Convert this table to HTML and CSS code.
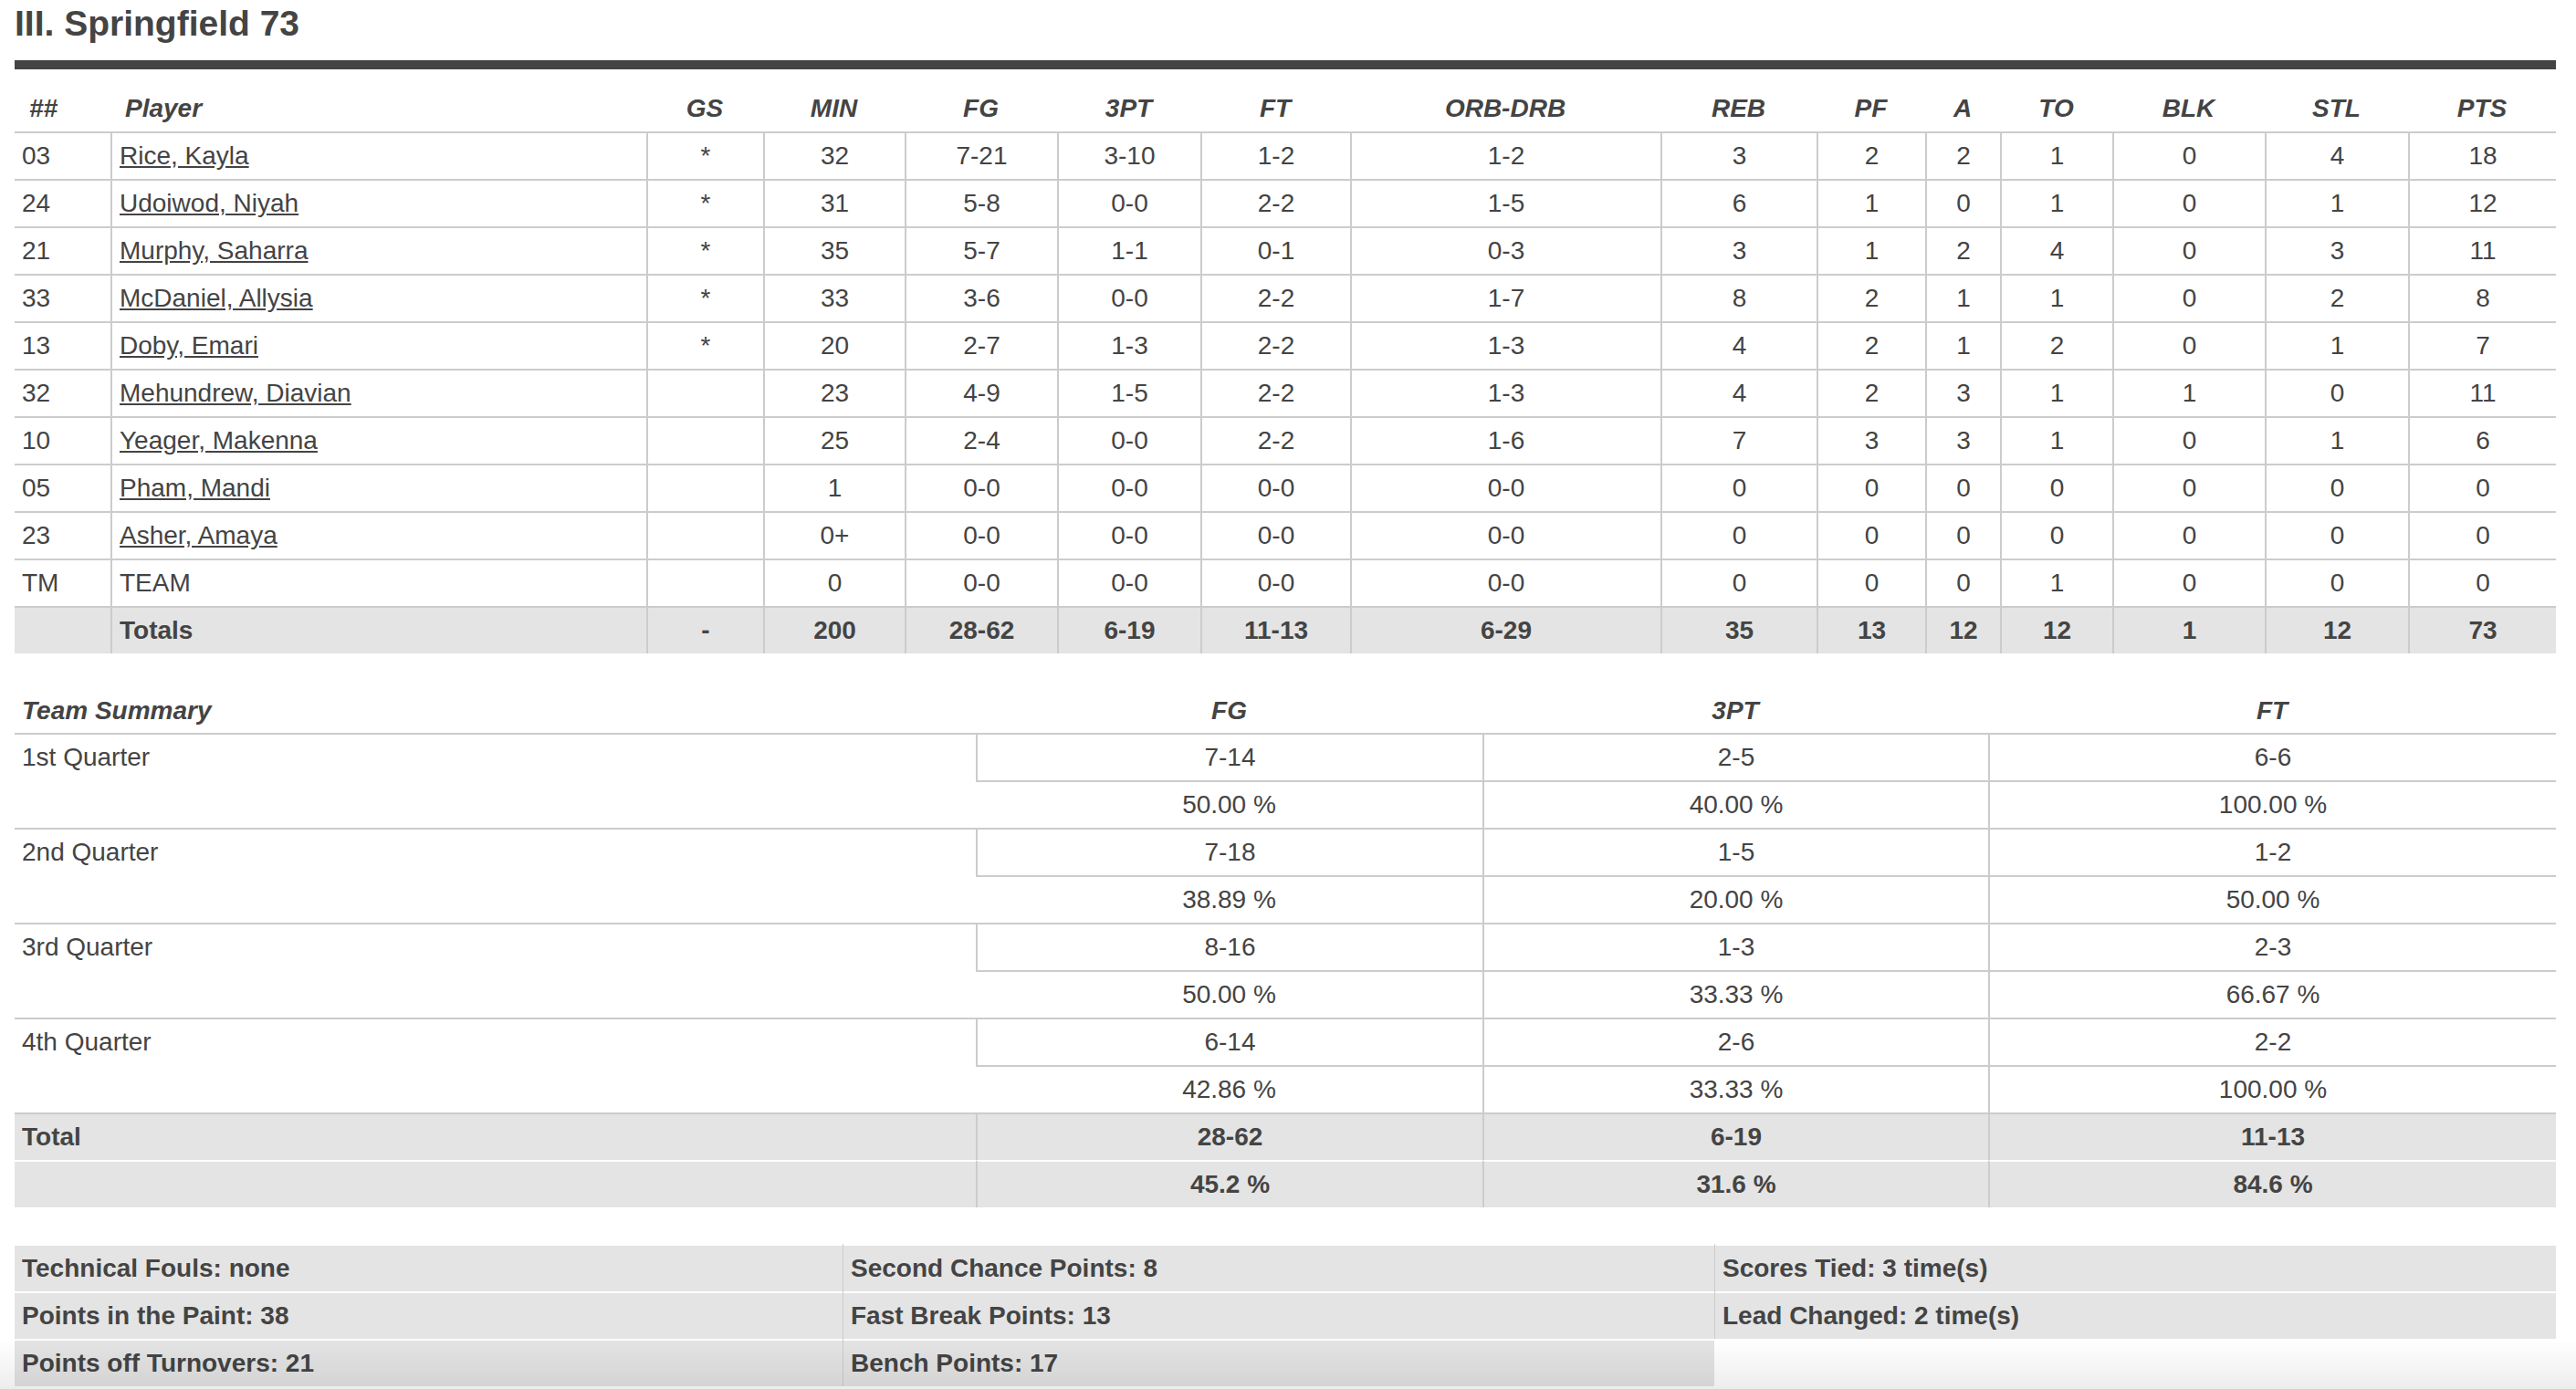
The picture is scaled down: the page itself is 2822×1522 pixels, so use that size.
FILE: index.html
```html
<!DOCTYPE html>
<html lang="en">
<head>
<meta charset="utf-8">
<title>Box Score</title>
<link rel="stylesheet" href="styles.css">
</head>
<body>
<div class="page">
  <h2 class="team-title">III. Springfield 73</h2>
  <div class="title-bar"></div>

  <table class="box">
    <colgroup>
      <col class="c-num"><col class="c-player"><col class="c-gs"><col class="c-min"><col class="c-fg"><col class="c-3pt"><col class="c-ft"><col class="c-reb2"><col class="c-reb"><col class="c-pf"><col class="c-a"><col class="c-to"><col class="c-blk"><col class="c-stl"><col class="c-pts">
    </colgroup>
    <thead>
      <tr>
        <th class="left">##</th><th class="left">Player</th><th>GS</th><th>MIN</th><th>FG</th><th>3PT</th><th>FT</th><th>ORB-DRB</th><th>REB</th><th>PF</th><th>A</th><th>TO</th><th>BLK</th><th>STL</th><th>PTS</th>
      </tr>
    </thead>
    <tbody>
      <tr><td class="left">03</td><td class="left"><a href="#">Rice, Kayla</a></td><td>*</td><td>32</td><td>7-21</td><td>3-10</td><td>1-2</td><td>1-2</td><td>3</td><td>2</td><td>2</td><td>1</td><td>0</td><td>4</td><td>18</td></tr>
      <tr><td class="left">24</td><td class="left"><a href="#">Udoiwod, Niyah</a></td><td>*</td><td>31</td><td>5-8</td><td>0-0</td><td>2-2</td><td>1-5</td><td>6</td><td>1</td><td>0</td><td>1</td><td>0</td><td>1</td><td>12</td></tr>
      <tr><td class="left">21</td><td class="left"><a href="#">Murphy, Saharra</a></td><td>*</td><td>35</td><td>5-7</td><td>1-1</td><td>0-1</td><td>0-3</td><td>3</td><td>1</td><td>2</td><td>4</td><td>0</td><td>3</td><td>11</td></tr>
      <tr><td class="left">33</td><td class="left"><a href="#">McDaniel, Allysia</a></td><td>*</td><td>33</td><td>3-6</td><td>0-0</td><td>2-2</td><td>1-7</td><td>8</td><td>2</td><td>1</td><td>1</td><td>0</td><td>2</td><td>8</td></tr>
      <tr><td class="left">13</td><td class="left"><a href="#">Doby, Emari</a></td><td>*</td><td>20</td><td>2-7</td><td>1-3</td><td>2-2</td><td>1-3</td><td>4</td><td>2</td><td>1</td><td>2</td><td>0</td><td>1</td><td>7</td></tr>
      <tr><td class="left">32</td><td class="left"><a href="#">Mehundrew, Diavian</a></td><td></td><td>23</td><td>4-9</td><td>1-5</td><td>2-2</td><td>1-3</td><td>4</td><td>2</td><td>3</td><td>1</td><td>1</td><td>0</td><td>11</td></tr>
      <tr><td class="left">10</td><td class="left"><a href="#">Yeager, Makenna</a></td><td></td><td>25</td><td>2-4</td><td>0-0</td><td>2-2</td><td>1-6</td><td>7</td><td>3</td><td>3</td><td>1</td><td>0</td><td>1</td><td>6</td></tr>
      <tr><td class="left">05</td><td class="left"><a href="#">Pham, Mandi</a></td><td></td><td>1</td><td>0-0</td><td>0-0</td><td>0-0</td><td>0-0</td><td>0</td><td>0</td><td>0</td><td>0</td><td>0</td><td>0</td><td>0</td></tr>
      <tr><td class="left">23</td><td class="left"><a href="#">Asher, Amaya</a></td><td></td><td>0+</td><td>0-0</td><td>0-0</td><td>0-0</td><td>0-0</td><td>0</td><td>0</td><td>0</td><td>0</td><td>0</td><td>0</td><td>0</td></tr>
      <tr><td class="left">TM</td><td class="left">TEAM</td><td></td><td>0</td><td>0-0</td><td>0-0</td><td>0-0</td><td>0-0</td><td>0</td><td>0</td><td>0</td><td>1</td><td>0</td><td>0</td><td>0</td></tr>
      <tr class="totals"><td class="left"></td><td class="left">Totals</td><td>-</td><td>200</td><td>28-62</td><td>6-19</td><td>11-13</td><td>6-29</td><td>35</td><td>13</td><td>12</td><td>12</td><td>1</td><td>12</td><td>73</td></tr>
    </tbody>
  </table>

  <table class="summary">
    <colgroup>
      <col class="s-label"><col class="s-fg"><col class="s-3pt"><col class="s-ft">
    </colgroup>
    <thead>
      <tr><th class="left">Team Summary</th><th>FG</th><th>3PT</th><th>FT</th></tr>
    </thead>
    <tbody>
      <tr><td class="left label" rowspan="2">1st Quarter</td><td>7-14</td><td>2-5</td><td>6-6</td></tr>
      <tr><td>50.00 %</td><td>40.00 %</td><td>100.00 %</td></tr>
      <tr><td class="left label" rowspan="2">2nd Quarter</td><td>7-18</td><td>1-5</td><td>1-2</td></tr>
      <tr><td>38.89 %</td><td>20.00 %</td><td>50.00 %</td></tr>
      <tr><td class="left label" rowspan="2">3rd Quarter</td><td>8-16</td><td>1-3</td><td>2-3</td></tr>
      <tr><td>50.00 %</td><td>33.33 %</td><td>66.67 %</td></tr>
      <tr><td class="left label" rowspan="2">4th Quarter</td><td>6-14</td><td>2-6</td><td>2-2</td></tr>
      <tr><td>42.86 %</td><td>33.33 %</td><td>100.00 %</td></tr>
      <tr class="totals"><td class="left">Total</td><td>28-62</td><td>6-19</td><td>11-13</td></tr>
      <tr class="totals second"><td class="left"></td><td>45.2 %</td><td>31.6 %</td><td>84.6 %</td></tr>
    </tbody>
  </table>

  <div class="extras">
    <div class="extras-col">
      <div class="extras-item">Technical Fouls: none</div>
      <div class="extras-item">Points in the Paint: 38</div>
      <div class="extras-item">Points off Turnovers: 21</div>
    </div>
    <div class="extras-col divided">
      <div class="extras-item">Second Chance Points: 8</div>
      <div class="extras-item">Fast Break Points: 13</div>
      <div class="extras-item">Bench Points: 17</div>
    </div>
    <div class="extras-col divided">
      <div class="extras-item">Scores Tied: 3 time(s)</div>
      <div class="extras-item">Lead Changed: 2 time(s)</div>
    </div>
  </div>
</div>
<div class="bottom-fade"></div>
</body>
</html>
```
FILE: styles.css
```css
html, body {
  margin: 0;
  padding: 0;
  background: #fff;
}

body {
  font-family: "Liberation Sans", Arial, Helvetica, sans-serif;
  font-size: 28px;
  color: #444;
}

.page {
  padding: 0 22px 0 16px;
}

.team-title {
  margin: 4px 0 0 0;
  font-size: 39px;
  line-height: 44px;
  font-weight: bold;
  color: #444;
}

.title-bar {
  height: 10px;
  background: #444;
  margin-top: 18px;
}

table {
  border-collapse: separate;
  border-spacing: 0;
  table-layout: fixed;
  width: 2784px;
}

th, td {
  padding: 0 8px;
  line-height: 50px;
  text-align: center;
  white-space: nowrap;
  overflow: hidden;
}

th {
  font-weight: bold;
  font-style: italic;
}

.left {
  text-align: left;
}

.box th.left {
  padding-left: 16px;
}

td {
  border-top: 2px solid #ccc;
  border-left: 2px solid #ccc;
}

td:first-child {
  border-left: none;
}

td a {
  color: #444;
  text-decoration: underline;
}

.box {
  margin-top: 18px;
}

.c-num { width: 105px; }
.c-player { width: 587px; }
.c-gs { width: 128px; }
.c-min { width: 155px; }
.c-fg { width: 167px; }
.c-3pt { width: 157px; }
.c-ft { width: 164px; }
.c-reb2 { width: 340px; }
.c-reb { width: 171px; }
.c-pf { width: 119px; }
.c-a { width: 82px; }
.c-to { width: 123px; }
.c-blk { width: 167px; }
.c-stl { width: 157px; }
.c-pts { width: 162px; }

tr.totals td {
  background: #e4e4e4;
  font-weight: bold;
}

.summary {
  margin-top: 38px;
}

.summary thead th {
  line-height: 49px;
}

.s-label { width: 1053px; }
.s-fg { width: 555px; }
.s-3pt { width: 554px; }
.s-ft { width: 622px; }

.summary td.label {
  vertical-align: top;
}

.summary tr.totals.second td {
  border-top-color: #fff;
}

.extras {
  margin-top: 40px;
  width: 2784px;
  display: grid;
  grid-template-columns: 907px 955px 922px;
  align-items: start;
}

.extras-col.divided {
  border-left: 1px solid #ccc;
}

.extras-item {
  border-top: 2px solid #fff;
  background: #e4e4e4;
  line-height: 50px;
  padding: 0 8px;
  font-weight: bold;
  white-space: nowrap;
}

.bottom-fade {
  position: fixed;
  left: 0;
  right: 0;
  bottom: 0;
  height: 54px;
  background: linear-gradient(to bottom, rgba(0, 0, 0, 0), rgba(0, 0, 0, 0.07));
  pointer-events: none;
}
```
